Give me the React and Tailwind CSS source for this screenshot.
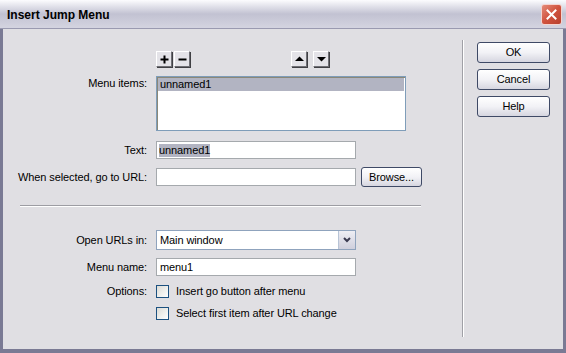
function XpButton({ children, className = "" }) {
  return (
    <button
      type="button"
      className={`flex items-center justify-center rounded-[3px] border border-[#3f4a66] bg-gradient-to-b from-white via-[#f2f2f6] to-[#d6d6e0] text-[11px] text-black ${className}`}
    >
      {children}
    </button>
  )
}

function ToolButton({ children }) {
  return (
    <button
      type="button"
      className="flex h-[16px] w-[16px] items-center justify-center border border-t-white border-l-white border-b-[#6f6f75] border-r-[#6f6f75] bg-[#e4e3e8] shadow-[1px_1px_0_#404044]"
    >
      {children}
    </button>
  )
}

function Checkbox() {
  return (
    <span className="block h-[13px] w-[13px] border border-[#1c5180] bg-gradient-to-br from-[#dcdcd6] to-white" />
  )
}

function Row({ label, children, className = "", labelClassName = "" }) {
  return (
    <div className={`flex ${className}`}>
      <div className={`w-[144px] shrink-0 text-right ${labelClassName}`}>{label}</div>
      <div className="ml-[9px] flex items-center">{children}</div>
    </div>
  )
}

export default function App() {
  return (
    <div className="flex h-[353px] w-[566px] flex-col bg-[#e0dfe3] font-['Liberation_Sans',Arial,sans-serif] text-[11px] tracking-[-0.1px] text-black">
      {/* title bar */}
      <div className="flex h-[29px] shrink-0 items-center justify-between border-b border-[#9a9ab0] bg-gradient-to-b from-[#fcfcfe] via-[#c2c2d2] to-[#d4d4e0] pl-[7px] pr-[4px]">
        <span className="pt-[2px] text-[12px] font-bold tracking-normal text-black">Insert Jump Menu</span>
        <button
          type="button"
          className="flex h-[21px] w-[21px] items-center justify-center rounded-[3px] border border-[#f4d4d0] bg-gradient-to-br from-[#e48a78] via-[#d0523e] to-[#b8402e]"
        >
          <svg width="11" height="11" viewBox="0 0 11 11">
            <path d="M1.5 1.5 L9.5 9.5 M9.5 1.5 L1.5 9.5" stroke="white" strokeWidth="2" strokeLinecap="square" />
          </svg>
        </button>
      </div>

      {/* body */}
      <div className="flex flex-1 border-x-[3px] border-b-[4px] border-[#7a7a94]">
        <div className="w-[459px] shrink-0 pt-[22px]">
          <div className="flex">
            <div className="ml-[153px] flex gap-[2px]">
              <ToolButton>
                <svg width="9" height="9" viewBox="0 0 9 9">
                  <path d="M4.5 0.5 V8.5 M0.5 4.5 H8.5" stroke="black" strokeWidth="2" />
                </svg>
              </ToolButton>
              <ToolButton>
                <svg width="9" height="9" viewBox="0 0 9 9">
                  <path d="M0.5 4.5 H8.5" stroke="black" strokeWidth="2" />
                </svg>
              </ToolButton>
            </div>
            <div className="ml-[101px] flex gap-[6px]">
              <ToolButton>
                <svg width="9" height="6" viewBox="0 0 9 6">
                  <path d="M0 5 L4.5 0.5 L9 5 Z" fill="black" />
                </svg>
              </ToolButton>
              <ToolButton>
                <svg width="9" height="6" viewBox="0 0 9 6">
                  <path d="M0 1 L4.5 5.5 L9 1 Z" fill="black" />
                </svg>
              </ToolButton>
            </div>
          </div>

          <Row label="Menu items:" className="mt-[9px]" labelClassName="pt-[1px] leading-[13px]">
            <div className="h-[55px] w-[250px] border border-[#7f9db9] bg-white p-[1px] shadow-[inset_1px_1px_0_#8a8878]">
              <div className="h-[13px] bg-[#b2b4c2] pl-[2px] leading-[13px]">unnamed1</div>
            </div>
          </Row>

          <Row label="Text:" className="mt-[10px] items-center">
            <div className="flex h-[18px] w-[200px] items-center border border-[#a5a9ad] bg-white pl-[2px]">
              <span className="bg-[#b2b4c2] leading-[13px]">unnamed1</span>
            </div>
          </Row>

          <Row label="When selected, go to URL:" className="mt-[8px] items-center">
            <div className="h-[18px] w-[200px] border border-[#a5a9ad] bg-white" />
            <XpButton className="ml-[5px] h-[20px] w-[61px]">Browse...</XpButton>
          </Row>

          <div className="ml-[17px] mt-[18px] h-[2px] w-[401px] border-t border-[#9d9da3] border-b border-b-white" />

          <Row label="Open URLs in:" className="mt-[23px] items-center">
            <div className="flex h-[20px] w-[200px] items-center border border-[#8fa3bd] bg-white">
              <span className="flex-1 pl-[3px]">Main window</span>
              <span className="flex h-[18px] w-[17px] items-center justify-center border-l border-[#b8c4d6] bg-gradient-to-b from-[#eeeef4] to-[#cfcfdc]">
                <svg width="8" height="6" viewBox="0 0 8 6">
                  <path d="M1 1 L4 4 L7 1" stroke="#3a3a50" strokeWidth="2" fill="none" />
                </svg>
              </span>
            </div>
          </Row>

          <Row label="Menu name:" className="mt-[8px] items-center">
            <div className="flex h-[18px] w-[200px] items-center border border-[#a5a9ad] bg-white pl-[3px]">menu1</div>
          </Row>

          <Row label="Options:" className="mt-[9px] h-[13px] items-center leading-[13px]">
            <Checkbox />
            <span className="ml-[7px]">Insert go button after menu</span>
          </Row>

          <Row label="" className="mt-[9px] h-[13px] items-center leading-[13px]">
            <Checkbox />
            <span className="ml-[7px]">Select first item after URL change</span>
          </Row>
        </div>

        <div className="mb-[12px] mt-[11px] w-[2px] shrink-0 border-l border-[#a0a0a6] border-r border-r-white" />

        <div className="flex flex-col gap-[6px] pl-[13px] pt-[13px]">
          <XpButton className="h-[21px] w-[73px]">OK</XpButton>
          <XpButton className="h-[21px] w-[73px]">Cancel</XpButton>
          <XpButton className="h-[21px] w-[73px]">Help</XpButton>
        </div>
      </div>
    </div>
  )
}
